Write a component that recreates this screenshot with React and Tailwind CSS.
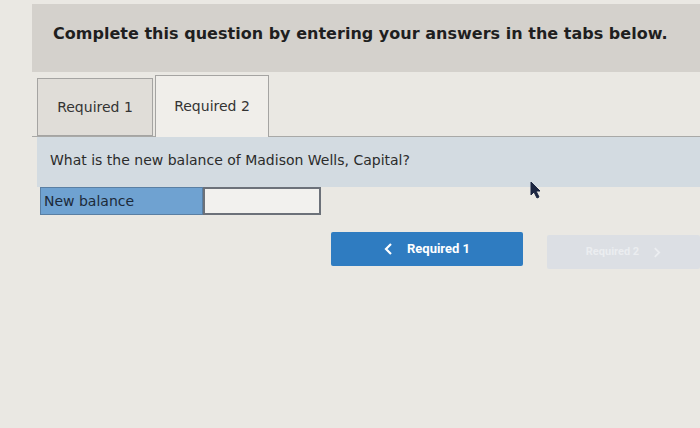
export default function App() {
  return (
    <div className="relative w-[700px] h-[428px] overflow-hidden bg-[#eae8e3]" style={{ fontFamily: '"DejaVu Sans", Verdana, sans-serif' }}>
      <div className="pt-[4px] pl-[32px]">
        <div className="h-[68px] bg-[#d4d1cc] pl-[21px] pt-[18px]">
          <h1 className="text-[16px] font-bold text-[#1f1f1f] tracking-[0.02px]">Complete this question by entering your answers in the tabs below.</h1>
        </div>
        <div className="flex items-end mt-[3px] pl-[5px] border-b border-[#a9a9a7]">
          <div className="w-[116px] h-[58px] bg-[#e0ddd8] border border-[#a5a4a2] flex items-center justify-center text-[14px] text-[#333]">Required 1</div>
          <div className="w-[114px] h-[62px] bg-[#f0eeea] border border-[#a5a4a2] border-b-0 flex items-center justify-center text-[14px] text-[#333] ml-[2px] -mb-px">Required 2</div>
        </div>
        <div className="ml-[5px] h-[50px] bg-[#d3dbe1] pl-[13px] pt-[13px] text-[14px] text-[#2b2b2b]">What is the new balance of Madison Wells, Capital?</div>
        <div className="flex ml-[8px] h-[28px]">
          <div className="w-[163px] bg-[#6fa2d1] border border-[#5a7fa3] pl-[3px] text-[14px] text-[#1c2a3a] flex items-center">New balance</div>
          <div className="w-[118px] bg-[#f2f1ee] border-2 border-[#6c7179]"></div>
        </div>
        <div className="flex mt-[17px] ml-[299px] gap-[24px]">
          <button className="w-[192px] shrink-0 h-[34px] bg-[#2f7cc1] rounded-[2px] flex items-center justify-center gap-[14px] text-white text-[13px] font-bold" style={{ fontFamily: 'Roboto, "DejaVu Sans", sans-serif' }}>
            <svg width="9" height="12" viewBox="0 0 9 12"><path d="M7 1 L2 6 L7 11" fill="none" stroke="white" strokeWidth="2.2" /></svg>
            <span>Required 1</span>
          </button>
          <button className="w-[153px] shrink-0 h-[34px] mt-[3px] bg-[#dcdfe4] rounded-[2px] flex items-center justify-center gap-[14px] text-[#ebedf0] text-[11px] font-bold" style={{ fontFamily: 'Roboto, "DejaVu Sans", sans-serif' }}>
            <span>Required 2</span>
            <svg width="8" height="11" viewBox="0 0 9 12"><path d="M2 1 L7 6 L2 11" fill="none" stroke="#eceef1" strokeWidth="2" /></svg>
          </button>
        </div>
      </div>
      <svg className="absolute left-[530px] top-[181px]" width="12" height="18" viewBox="0 0 12 18">
        <path d="M1 1 L1 14 L4 11 L7 17 L9 16 L6 10 L10 10 Z" fill="#1b2540" stroke="#1b2540" strokeWidth="1" strokeLinejoin="round" />
      </svg>
    </div>
  );
}
